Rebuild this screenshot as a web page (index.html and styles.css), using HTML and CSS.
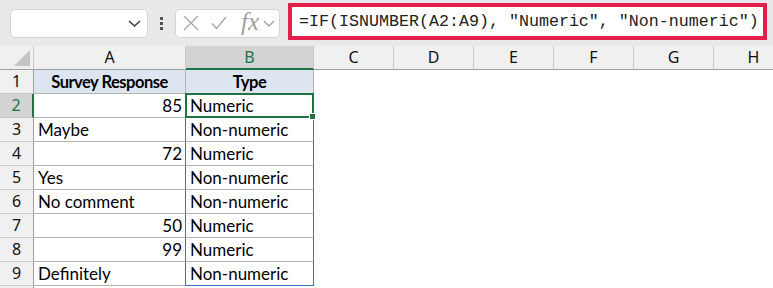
FILE: index.html
```html
<!DOCTYPE html>
<html lang="en">
<head>
    <meta charset="UTF-8">
    <title>ISNUMBER example</title>
    <link rel="stylesheet" href="styles.css">
</head>
<body>
    <div class="topbar">
        <div class="namebox">
            <svg class="chev" width="13" height="7" viewBox="0 0 13 7"><path d="M1 1 L6.5 6 L12 1" fill="none" stroke="#3c3c3c" stroke-width="1.5"/></svg>
        </div>
        <div class="dots"><span></span><span></span><span></span></div>
        <div class="fxbox">
            <svg width="16" height="16" viewBox="0 0 16 16"><path d="M1 1 L15 15 M15 1 L1 15" stroke="#a8a8a8" stroke-width="1.4" fill="none"/></svg>
            <svg width="16" height="14" viewBox="0 0 16 14"><path d="M1 7.5 L5.5 12.5 L15 1" stroke="#a8a8a8" stroke-width="1.4" fill="none"/></svg>
            <span class="fx">fx</span>
            <svg width="12" height="7" viewBox="0 0 12 7"><path d="M1 1 L6 6 L11 1" fill="none" stroke="#a0a0a0" stroke-width="1.3"/></svg>
        </div>
        <div class="formula">=IF(ISNUMBER(A2:A9), "Numeric", "Non-numeric")</div>
    </div>

    <div class="sheet">
        <div class="row head">
            <div class="corner"><span class="tri"></span></div>
            <div>A</div>
            <div class="sel">B</div>
            <div>C</div>
            <div>D</div>
            <div>E</div>
            <div>F</div>
            <div>G</div>
            <div>H</div>
        </div>
        <div class="row">
            <div class="num">1</div>
            <div class="cell title">Survey Response</div>
            <div class="cell title">Type</div>
        </div>
        <div class="row">
            <div class="num sel">2</div>
            <div class="cell right">85</div>
            <div class="cell active">Numeric</div>
        </div>
        <div class="row">
            <div class="num">3</div>
            <div class="cell">Maybe</div>
            <div class="cell spill">Non-numeric</div>
        </div>
        <div class="row">
            <div class="num">4</div>
            <div class="cell right">72</div>
            <div class="cell spill">Numeric</div>
        </div>
        <div class="row">
            <div class="num">5</div>
            <div class="cell">Yes</div>
            <div class="cell spill">Non-numeric</div>
        </div>
        <div class="row">
            <div class="num">6</div>
            <div class="cell">No comment</div>
            <div class="cell spill">Non-numeric</div>
        </div>
        <div class="row">
            <div class="num">7</div>
            <div class="cell right">50</div>
            <div class="cell spill">Numeric</div>
        </div>
        <div class="row">
            <div class="num">8</div>
            <div class="cell right">99</div>
            <div class="cell spill">Numeric</div>
        </div>
        <div class="row">
            <div class="num">9</div>
            <div class="cell">Definitely</div>
            <div class="cell spill last">Non-numeric</div>
        </div>
        <div class="row stub">
            <div class="num"></div>
        </div>
    </div>
</body>
</html>
```

FILE: styles.css
```css
body {
    margin: 0;
    background: #fff;
    font-family: 'Noto Sans', 'Liberation Sans', sans-serif;
    overflow: hidden;
}
.topbar {
    height: 46px;
    background: #e9e9eb;
    display: flex;
    align-items: center;
    padding-left: 10px;
}
.namebox {
    width: 138px;
    height: 29px;
    box-sizing: border-box;
    background: #fff;
    border: 1px solid #d4d4d6;
    border-radius: 5px;
    display: flex;
    align-items: center;
    justify-content: flex-end;
    padding-right: 6px;
}
.dots {
    display: flex;
    flex-direction: column;
    gap: 2px;
    margin: 0 12px;
}
.dots span {
    width: 3px;
    height: 3px;
    background: #555;
}
.fxbox {
    width: 105px;
    height: 29px;
    box-sizing: border-box;
    background: #fff;
    border: 1px solid #d4d4d6;
    border-radius: 5px;
    display: flex;
    align-items: center;
    padding-left: 7px;
}
.fxbox svg:nth-child(2) {
    margin-left: 12px;
}
.fx {
    font-family: 'Liberation Serif', serif;
    font-style: italic;
    font-size: 25px;
    color: #a0a0a0;
    margin-left: 14px;
    margin-right: 4px;
    line-height: 1;
    margin-top: -3px;
}
.formula {
    margin-left: 8px;
    margin-top: -3px;
    width: 479px;
    height: 37px;
    box-sizing: border-box;
    border: 4px solid #e31f4c;
    background: #fff;
    font-family: 'Liberation Mono', monospace;
    font-size: 16.67px;
    color: #222;
    padding-left: 7px;
    display: flex;
    align-items: center;
    white-space: nowrap;
}
.row {
    display: grid;
    grid-template-columns: 34px 152px 128px 80px 80px 80px 80px 80px 80px;
    height: 24px;
}
.row > div {
    box-sizing: border-box;
    height: 24px;
}
.row.stub {
    height: 2px;
    overflow: hidden;
}
.head > div {
    background: #f0f0f0;
    border-right: 1px solid #c8c8c8;
    border-bottom: 1px solid #a0a0a0;
    text-align: center;
    font-size: 16px;
    line-height: 23px;
    color: #111;
}
.head > div.sel {
    background: #d3d3d3;
    color: #217346;
    border-bottom: 2px solid #217346;
}
.corner {
    position: relative;
}
.tri {
    position: absolute;
    right: 3px;
    bottom: 3px;
    width: 0;
    height: 0;
    border-left: 16px solid transparent;
    border-bottom: 16px solid #c4c4c4;
}
.num {
    background: #f0f0f0;
    border-right: 1px solid #a0a0a0;
    border-bottom: 1px solid #c8c8c8;
    text-align: center;
    font-size: 16px;
    line-height: 23px;
    color: #111;
}
.num.sel {
    background: #d3d3d3;
    color: #217346;
    border-right: 2px solid #217346;
}
.cell {
    border-right: 1px solid #b4b4b4;
    border-bottom: 1px solid #b4b4b4;
    font-family: 'Lato', 'Liberation Sans', sans-serif;
    font-size: 17px;
    line-height: 24px;
    color: #000;
    padding: 0 4px;
    white-space: nowrap;
}
.right {
    text-align: right;
    padding-right: 3px;
}
.title {
    background: #dde6f0;
    font-weight: bold;
    font-size: 16.5px;
    letter-spacing: -0.5px;
    text-align: center;
}
.active {
    position: relative;
}
.active::after {
    content: "";
    position: absolute;
    left: -1px;
    top: -1px;
    right: -1px;
    bottom: -1px;
    border: 2px solid #217346;
}
.active::before {
    content: "";
    position: absolute;
    right: -3px;
    bottom: -3px;
    width: 5px;
    height: 5px;
    background: #217346;
    border: 1px solid #fff;
    z-index: 2;
}
.spill {
    border-left: 1px solid #3b6fcf;
    border-right: 1px solid #3b6fcf;
    margin-left: -1px;
    width: calc(100% + 1px);
}
.spill.last {
    border-bottom: 1px solid #3b6fcf;
}
```
